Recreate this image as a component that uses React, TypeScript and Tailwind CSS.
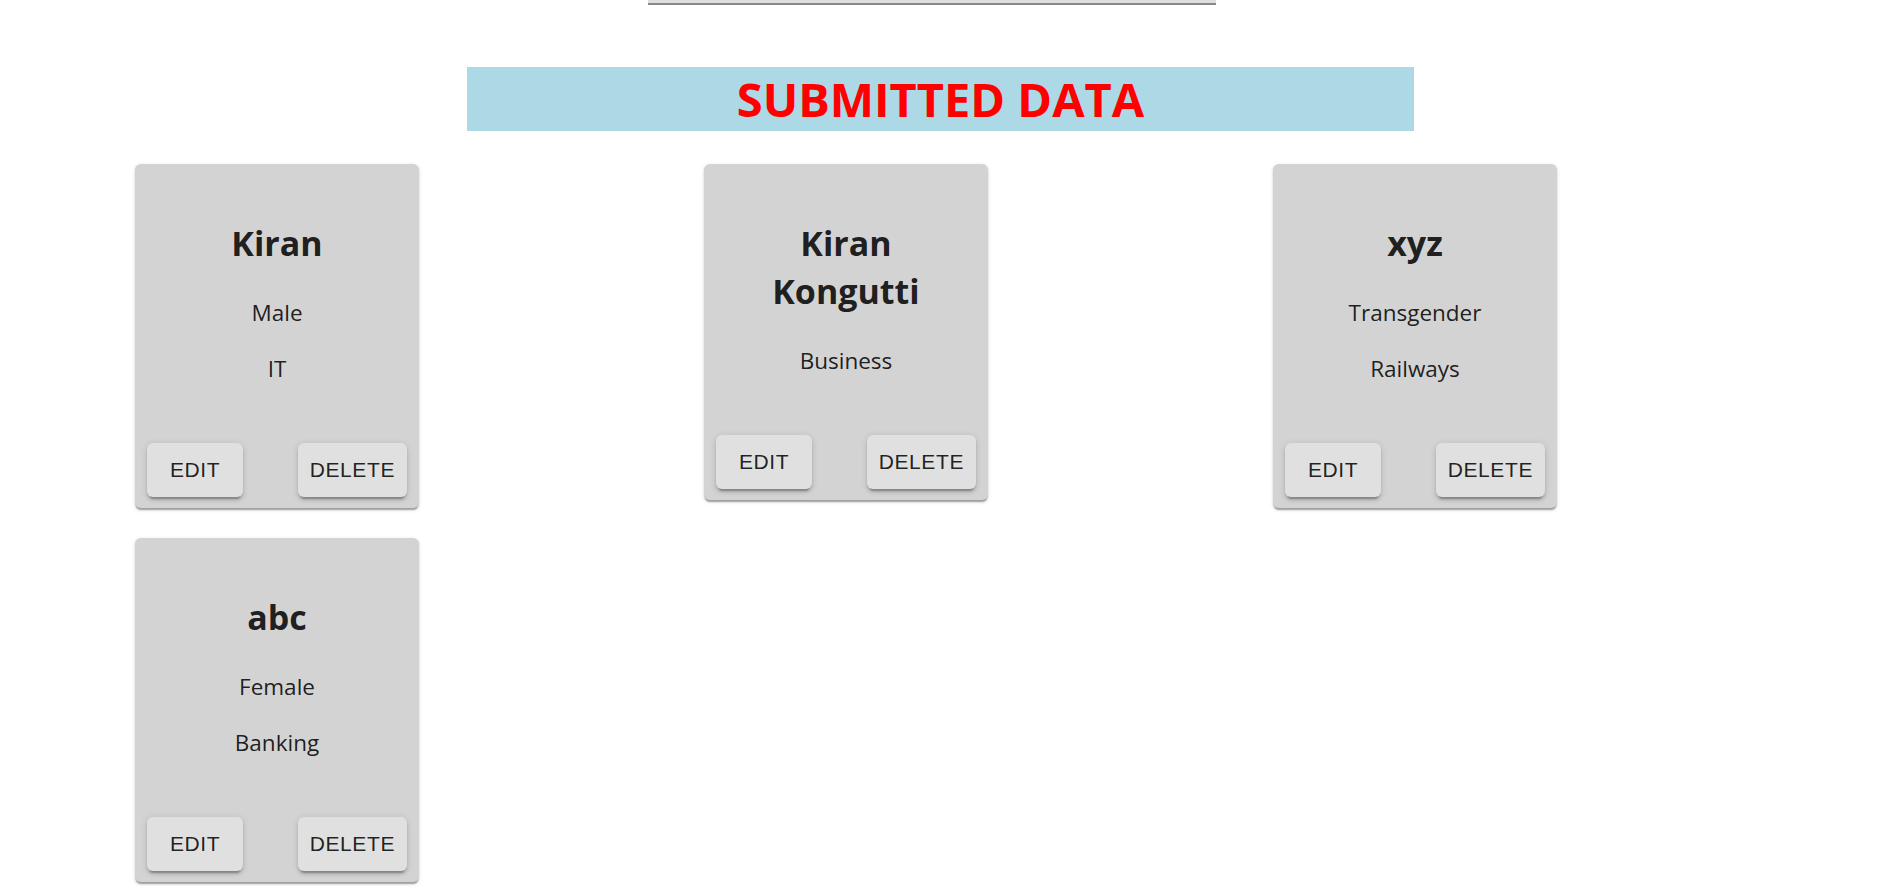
import React from 'react';

type Entry = { name: string; gender: string; dept: string };

const entries: Entry[] = [
  { name: 'Kiran', gender: 'Male', dept: 'IT' },
  { name: 'Kiran Kongutti', gender: '', dept: 'Business' },
  { name: 'xyz', gender: 'Transgender', dept: 'Railways' },
  { name: 'abc', gender: 'Female', dept: 'Banking' },
];

function ActionButton({ label }: { label: string }) {
  return (
    <button
      type="button"
      className="min-w-[96px] px-[12px] py-[9px] rounded-[6px] bg-[#e0e0e0] text-black/87 font-['Liberation_Sans',Arial,sans-serif] text-[21px] leading-[36px] tracking-[0.6px] uppercase shadow-[0_4.5px_1.5px_-3px_rgba(0,0,0,0.2),0_3px_3px_0_rgba(0,0,0,0.14),0_1.5px_7.5px_0_rgba(0,0,0,0.12)]"
    >
      {label}
    </button>
  );
}

function DataCard({ entry }: { entry: Entry }) {
  return (
    <div className="w-[284px] rounded-[6px] bg-[#d3d3d3] shadow-[0_3px_1.5px_-1.5px_rgba(0,0,0,0.2),0_1.5px_1.5px_0_rgba(0,0,0,0.14),0_1.5px_4.5px_0_rgba(0,0,0,0.12)]">
      {/* content */}
      <div className="p-[24px] text-center text-black/87">
        <h2 className="mt-[31px] mb-[30px] text-[34px] leading-[48px] font-bold">{entry.name}</h2>
        <p className="my-[24px] text-[22.5px] leading-[32px]">{entry.gender}</p>
        <p className="my-[24px] text-[22.5px] leading-[32px]">{entry.dept}</p>
      </div>
      {/* actions */}
      <div className="flex justify-between px-[12px] pt-[10px] pb-[11px]">
        <ActionButton label="Edit" />
        <ActionButton label="Delete" />
      </div>
    </div>
  );
}

export default function App() {
  return (
    <div className="min-h-screen bg-white font-['Open_Sans',sans-serif]">
      <div className="ml-[648px] w-[568px] h-[5px] bg-[#dedede] border-b-2 border-[#888888]" />

      <div className="ml-[467px] mt-[62px] w-[947px] bg-[#add8e6]">
        <h1 className="text-center text-[47px] leading-[64px] font-bold text-[#ff0000]">SUBMITTED DATA</h1>
      </div>

      <div className="mt-[33px] pl-[135px] pb-[10px] grid grid-cols-[repeat(3,569px)] gap-y-[30px] items-start">
        {entries.map((e) => (
          <DataCard key={e.name} entry={e} />
        ))}
      </div>
    </div>
  );
}
